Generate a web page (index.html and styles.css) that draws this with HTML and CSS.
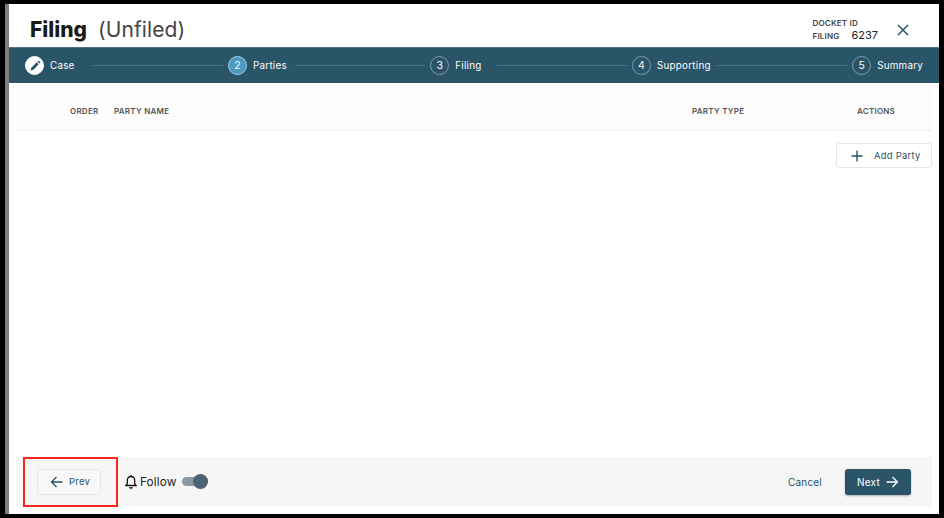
FILE: index.html
```html
<!DOCTYPE html>
<html lang="en">
<head>
<meta charset="utf-8">
<title>Filing</title>
<link rel="stylesheet" href="styles.css">
</head>
<body>
<div class="frame">
  <div class="modal">
    <header class="head">
      <h1 class="title"><strong>Filing</strong><span class="sub">(Unfiled)</span></h1>
      <div class="docket">
        <div class="docket-text">
          <div class="docket-label">DOCKET ID</div>
          <div class="docket-row"><span class="docket-label">FILING</span><span class="docket-num">6237</span></div>
        </div>
        <svg class="close" width="12" height="12" viewBox="0 0 12 12"><path d="M1 1l10 10M11 1L1 11" stroke="#2a5468" stroke-width="1.5" fill="none"/></svg>
      </div>
    </header>
    <nav class="steps">
      <div class="step step-case">
        <span class="circle done"><svg width="12" height="12" viewBox="0 0 12 12"><path d="M1.500 10.500l.6-2.600 5.600-5.600 2 2-5.600 5.600z M8.400 1.600l.7-.7a.7.7 0 0 1 1 0l1 1a.7.7 0 0 1 0 1l-.7.7z" fill="#2a5468"/></svg></span>
        <span class="label">Case</span>
      </div>
      <span class="line"></span>
      <div class="step step-parties">
        <span class="circle active">2</span>
        <span class="label">Parties</span>
      </div>
      <span class="line"></span>
      <div class="step step-filing">
        <span class="circle">3</span>
        <span class="label">Filing</span>
      </div>
      <span class="line"></span>
      <div class="step">
        <span class="circle">4</span>
        <span class="label">Supporting</span>
      </div>
      <span class="line"></span>
      <div class="step">
        <span class="circle">5</span>
        <span class="label">Summary</span>
      </div>
    </nav>
    <main class="content">
      <div class="table-head">
        <span class="col col-order">ORDER</span>
        <span class="col col-name">PARTY NAME</span>
        <span class="col col-type">PARTY TYPE</span>
        <span class="col col-actions">ACTIONS</span>
      </div>
      <div class="add-row">
        <button class="btn add">
          <svg width="12" height="12" viewBox="0 0 12 12"><path d="M6 .5v11M.5 6h11" stroke="#2a5468" stroke-width="1.4" fill="none"/></svg>
          <span>Add Party</span>
        </button>
      </div>
    </main>
    <footer class="foot">
      <div class="foot-left">
        <button class="btn prev">
          <svg width="13" height="12" viewBox="0 0 13 12"><path d="M12.500 6H1.500M6.500 1l-5 5 5 5" stroke="#2a5468" stroke-width="1.300" fill="none"/></svg>
          <span>Prev</span>
        </button>
        <div class="follow">
          <svg width="12" height="15" viewBox="0 0 12 15"><path d="M1 11.500h10l-1.300-2V6.200C9.700 4 8.200 2.500 6 2.500S2.300 4 2.300 6.200v3.300zM6 1v1.500M4.800 13a1.200 1.200 0 0 0 2.400 0" stroke="#111" stroke-width="1.300" fill="none"/></svg>
          <span class="follow-text">Follow</span>
          <span class="toggle"><span class="knob"></span></span>
        </div>
      </div>
      <div class="foot-right">
        <span class="cancel">Cancel</span>
        <button class="next">
          <span>Next</span>
          <svg width="13" height="12" viewBox="0 0 13 12"><path d="M.5 6h11M6.500 1l5 5-5 5" stroke="#fff" stroke-width="1.300" fill="none"/></svg>
        </button>
      </div>
    </footer>
    <div class="marker"></div>
  </div>
</div>
</body>
</html>
```
FILE: styles.css
```css
* { box-sizing: border-box; }
html, body { margin: 0; height: 100%; }
body { background: #000; font-family: Inter, "Noto Sans", sans-serif; overflow: hidden; }
.frame { width: 944px; height: 518px; padding: 4px 5px 4px 5px; }
.modal { position: relative; height: 100%; background: #fff; display: flex; flex-direction: column; border-left: 4px solid #7d7d7d; }
.head { height: 43px; flex: none; display: flex; justify-content: space-between; align-items: center; padding: 8px 30px 0 21px; }
.title { margin: 0; font-size: 21px; font-weight: 400; color: #1a1a1a; display: flex; gap: 11px; align-items: baseline; }
.title strong { font-weight: 800; }
.sub { color: #444; letter-spacing: .1px; }
.docket { display: flex; align-items: center; gap: 19px; }
.docket-text { display: flex; flex-direction: column; }
.docket-label { font-size: 8px; font-weight: 600; color: #444; letter-spacing: .2px; line-height: 12px; }
.docket-row { display: flex; align-items: baseline; gap: 12px; }
.docket-num { font-size: 11px; color: #222; line-height: 13px; }
.steps { height: 36px; flex: none; background: #2a5468; display: flex; align-items: center; padding: 0 16px 0 16px; border-top: 1px solid #4d7385; }
.step { display: flex; align-items: center; gap: 6px; flex: none; }
.step-case { padding-right: 12px; }
.step-parties { padding-right: 2px; }
.step-filing { padding-right: 9px; }
.circle { width: 19px; height: 19px; border-radius: 50%; border: 1px solid #7f9cab; color: #fff; font-size: 10.500px; display: flex; align-items: center; justify-content: center; }
.circle.done { background: #fff; border-color: #fff; }
.circle.active { background: #4a9ac4; border-color: #a8cde0; }
.label { font-size: 9.800px; color: #fff; letter-spacing: .25px; padding-bottom: 1px; }
.line { flex: 1; height: 1px; background: #4d7385; margin: 0 5px 0 6px; }
.content { flex: 1; min-height: 0; padding: 0 7px 0 7px; background: #fff; }
.table-head { height: 48px; display: flex; align-items: center; padding-top: 8px; border-bottom: 1px solid #ececec; background: #fdfdfd; }
.col { font-size: 8px; font-weight: 600; color: #555; letter-spacing: .25px; flex: none; }
.col-order { margin-left: 54px; width: 44px; }
.col-name { width: 578px; }
.col-type { width: 165px; }
.add-row { display: flex; justify-content: flex-end; padding-top: 12px; }
.btn { display: inline-flex; align-items: center; background: #fff; border: 1px solid #e6e6e6; border-radius: 3px; font-family: inherit; padding: 0; color: #2a5468; }
.add { width: 96px; height: 25px; gap: 11px; padding-left: 14px; font-size: 9.500px; letter-spacing: .2px; }
.foot { height: 49px; flex: none; margin: 0 7px 8px 7px; background: #f6f6f6; display: flex; justify-content: space-between; align-items: center; padding: 0 21px 0 21px; }
.foot-left, .foot-right { display: flex; align-items: center; }
.prev { width: 64px; height: 26px; gap: 6px; padding-left: 12px; font-size: 9.500px; background: #f8f8f8; letter-spacing: .2px; }
.follow { display: flex; align-items: center; margin-left: 24px; gap: 3px; }
.follow-text { font-size: 11.800px; color: #222; letter-spacing: .1px; }
.toggle { position: relative; width: 26px; height: 9px; border-radius: 5px; background: #8d9aa3; margin-left: 3px; }
.knob { position: absolute; right: 0; top: -3px; width: 15px; height: 15px; border-radius: 50%; background: #4d6273; }
.cancel { font-size: 10px; color: #2a5468; letter-spacing: .2px; margin-right: 23px; }
.next { width: 66px; height: 26px; background: #2a5468; border: 0; border-radius: 3px; color: #fff; font-family: inherit; font-size: 10px; letter-spacing: .2px; display: flex; align-items: center; justify-content: center; gap: 6px; box-shadow: 0 1px 2px rgba(0,0,0,.3); padding: 0; }
.marker { position: absolute; left: 14px; top: 453px; width: 95px; height: 50px; border: 2px solid #f5281c; pointer-events: none; }
```
